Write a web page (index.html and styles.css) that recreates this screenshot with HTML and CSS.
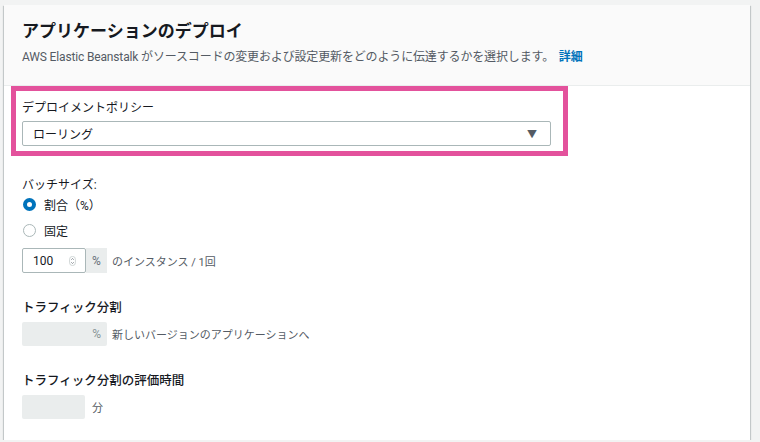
FILE: index.html
```html
<!DOCTYPE html>
<html lang="ja">
<head>
    <meta charset="UTF-8">
    <title>アプリケーションのデプロイ</title>
    <link rel="stylesheet" href="styles.css">
</head>
<body>

    <!-- Deploy settings card -->
    <div class="card">
        <div class="card-header">
            <h2>アプリケーションのデプロイ</h2>
            <p class="desc">AWS Elastic Beanstalk がソースコードの変更および設定更新をどのように伝達するかを選択します。 <a href="#">詳細</a></p>
        </div>

        <div class="card-body">
            <div class="highlight">
                <label class="field-label">デプロイメントポリシー</label>
                <div class="select">
                    <span>ローリング</span>
                    <span class="caret">&#9660;</span>
                </div>
            </div>

            <div class="section batch">
                <div class="field-label">バッチサイズ:</div>
                <div class="radio-row">
                    <span class="radio checked"></span>
                    <span>割合（%）</span>
                </div>
                <div class="radio-row">
                    <span class="radio"></span>
                    <span>固定</span>
                </div>
                <div class="input-row">
                    <div class="num-input">
                        <span>100</span>
                        <svg class="spin" viewBox="0 0 8 12" width="7" height="10">
                            <rect x="0.5" y="0.5" width="7" height="11" rx="3.5" fill="none" stroke="#c6cece"/>
                            <path d="M2.5 4.5L4 3l1.5 1.5M2.5 7.5L4 9l1.5-1.5" fill="none" stroke="#687078" stroke-width="0.9"/>
                        </svg>
                    </div>
                    <span class="addon">%</span>
                    <span class="hint">のインスタンス / 1回</span>
                </div>
            </div>

            <div class="section traffic">
                <div class="field-label strong">トラフィック分割</div>
                <div class="input-row">
                    <div class="disabled-input wide">%</div>
                    <span class="hint">新しいバージョンのアプリケーションへ</span>
                </div>
            </div>

            <div class="section last">
                <div class="field-label strong">トラフィック分割の評価時間</div>
                <div class="input-row">
                    <div class="disabled-input"></div>
                    <span class="hint">分</span>
                </div>
            </div>
        </div>
    </div>

</body>
</html>
```

FILE: styles.css
```css
/* --- General --- */
body {
    font-family: Roboto, "Noto Sans CJK JP", sans-serif;
    background-color: #f2f3f3;
    color: #16191f;
    margin: 0;
    padding: 5px 10px 0 4px;
}

/* --- Card --- */
.card {
    background: #fff;
    box-shadow: 0 1px 1px 0 rgba(0,28,36,0.3), 1px 1px 1px 0 rgba(0,28,36,0.15), -1px 1px 1px 0 rgba(0,28,36,0.15);
}

.card-header {
    background-color: #fafafa;
    border-bottom: 1px solid #eaeded;
    padding: 15px 18px 20px;
}

.card-header h2 {
    font-size: 17px;
    font-weight: 700;
    line-height: 22px;
    margin: 0 0 7px;
}

.desc {
    font-size: 12px;
    line-height: 16px;
    color: #545b64;
    margin: 0;
    letter-spacing: -0.15px;
}

.desc a {
    color: #0073bb;
    font-weight: 700;
    text-decoration: none;
    margin-left: 2px;
}

.card-body {
    padding: 0 18px 21px;
}

/* --- Highlighted policy box --- */
.highlight {
    width: 529px;
    margin-left: -11px;
    border: 5px solid #e3529c;
    padding: 9px 12px 5px 6px;
}

.field-label {
    display: block;
    font-size: 12px;
    line-height: 16px;
    margin-bottom: 5px;
}

.field-label.strong {
    font-size: 12.5px;
    font-weight: 500;
    margin-bottom: 6px;
}

.select {
    display: flex;
    justify-content: space-between;
    align-items: center;
    height: 23px;
    border: 1px solid #aab7b8;
    border-radius: 2px;
    padding: 0 10px;
    font-size: 12px;
}

.caret {
    font-size: 10px;
    color: #545b64;
    margin-right: 3px;
}

/* --- Sections --- */
.section {
    margin-top: 27px;
}

.batch {
    margin-top: 21px;
}

.batch .field-label {
    margin-bottom: 1px;
}

.traffic {
    margin-top: 27px;
}

.radio-row {
    display: flex;
    align-items: center;
    gap: 8px;
    font-size: 12px;
    height: 20px;
    margin-bottom: 6px;
}

.radio-row + .radio-row {
    margin-bottom: 8px;
}

.radio {
    width: 11px;
    height: 11px;
    border: 1px solid #aab7b8;
    border-radius: 50%;
    margin-left: 1px;
}

.radio.checked {
    width: 5px;
    height: 5px;
    border: 4px solid #0073bb;
}

.input-row {
    display: flex;
    align-items: center;
}

.num-input {
    display: flex;
    align-items: center;
    justify-content: space-between;
    box-sizing: border-box;
    width: 64px;
    height: 25px;
    border: 1px solid #aab7b8;
    border-radius: 2px;
    padding: 0 9px 0 10px;
    font-size: 12px;
}

.addon {
    display: flex;
    align-items: center;
    justify-content: center;
    width: 21px;
    height: 25px;
    background: #eaeded;
    color: #687078;
    font-size: 12px;
}

.hint {
    font-size: 11px;
    color: #545b64;
    margin-left: 5px;
}

.disabled-input {
    box-sizing: border-box;
    width: 63px;
    height: 24px;
    background: #eaeded;
    border-radius: 2px;
    margin-right: 2px;
}

.disabled-input.wide {
    width: 85px;
    margin-right: 0;
    text-align: right;
    padding-right: 6px;
    line-height: 24px;
    font-size: 12px;
    color: #879596;
}
```
